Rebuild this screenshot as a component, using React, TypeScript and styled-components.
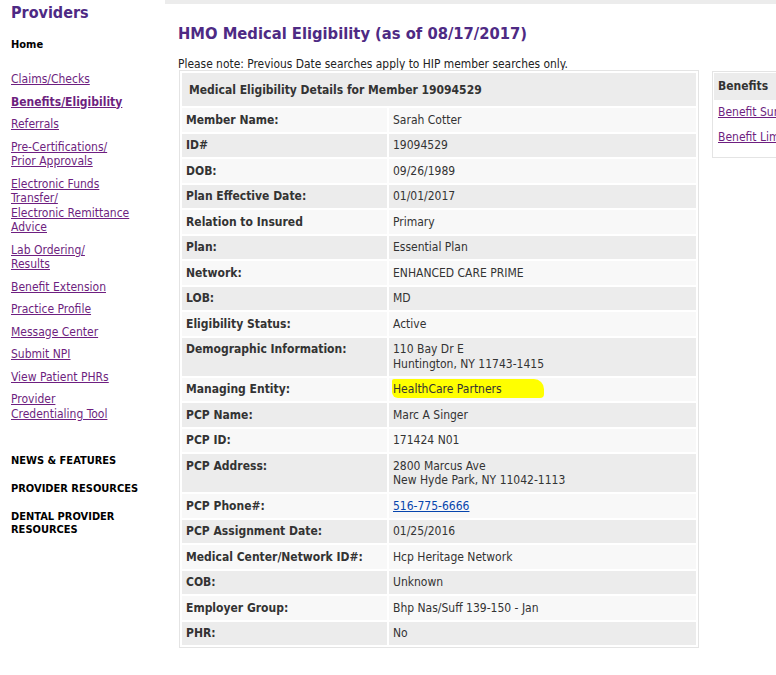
import React from "react";
import styled, { createGlobalStyle } from "styled-components";

const FONT = `"DejaVu Sans Condensed", Tahoma, "Liberation Sans", sans-serif`;

const Global = createGlobalStyle`
  html, body { margin: 0; padding: 0; background: #fff; }
  body { font-family: ${FONT}; font-size: 12px; color: #333; }
`;

const Page = styled.div`
  display: flex;
  align-items: flex-start;
  width: 776px;
  min-height: 675px;
  overflow: hidden;
`;

const Sidebar = styled.nav`
  flex: 0 0 165px;
  box-sizing: border-box;
  padding: 4px 0 0 11px;
`;

const Brand = styled.div`
  font-size: 16px;
  font-weight: bold;
  color: #4e2a84;
  line-height: 18px;
`;

const HomeLabel = styled.div`
  margin-top: 16px;
  font-size: 11px;
  font-weight: bold;
  color: #000;
  line-height: 14px;
`;

const NavList = styled.ul`
  list-style: none;
  margin: 20px 0 0;
  padding: 0;
  display: flex;
  flex-direction: column;
  gap: 8px;
`;

const NavLink = styled.a<{ $active?: boolean }>`
  display: block;
  font-size: 12px;
  line-height: 14.5px;
  color: #6e1f80;
  text-decoration: underline;
  font-weight: ${(p) => (p.$active ? "bold" : "normal")};
  cursor: pointer;
`;

const SectionList = styled.div`
  margin-top: 33px;
  display: flex;
  flex-direction: column;
  gap: 15px;
`;

const SectionHeading = styled.div`
  font-size: 11px;
  font-weight: bold;
  color: #000;
  line-height: 13px;
`;

const Main = styled.main`
  flex: 1;
  border-top: 4px solid #ececec;
  padding: 0 0 0 13px;
  min-width: 0;
`;

const Title = styled.h1`
  margin: 18px 0 0;
  font-size: 16.4px;
  font-weight: bold;
  color: #4e2a84;
  line-height: 24px;
`;

const Note = styled.p`
  margin: 11px 0 0;
  font-size: 11.9px;
  line-height: 15px;
  color: #222;
`;

const ContentRow = styled.div`
  display: flex;
  align-items: flex-start;
  gap: 13px;
`;

const DetailsTable = styled.table`
  margin: -2px 0 0 1px;
  width: 520px;
  flex: 0 0 520px;
  border: 1px solid #e4e4e4;
  border-spacing: 2px;
  box-sizing: border-box;
`;

const HeadCell = styled.th`
  background: #ececec;
  text-align: left;
  font-weight: bold;
  font-size: 12px;
  color: #333;
  height: 33px;
  padding: 0 7px;
`;

const Row = styled.tr<{ $alt: boolean }>`
  background: ${(p) => (p.$alt ? "#ececec" : "#f8f8f8")};
`;

const LabelCell = styled.td`
  width: 197px;
  padding: 4.5px 4px;
  font-weight: bold;
  line-height: 14.5px;
  vertical-align: top;
  color: #333;
`;

const ValueCell = styled.td`
  padding: 4.5px 4px;
  line-height: 14.5px;
  vertical-align: top;
  color: #333;
`;

const Highlight = styled.span`
  background: #ffff00;
  padding: 3px 42px 2px 1px;
  margin-left: -1px;
  border-radius: 2px 10px 4px 6px;
`;

const PhoneLink = styled.a`
  color: #0645ad;
  text-decoration: underline;
`;

const SidePanel = styled.aside`
  flex: 0 0 90px;
  margin-top: -1px;
  border: 1px solid #e4e4e4;
  padding: 1px 0 12px 1px;
`;

const SideHead = styled.div`
  background: #ececec;
  font-weight: bold;
  height: 27px;
  line-height: 27px;
  padding-left: 4px;
  color: #333;
  white-space: nowrap;
`;

const SideLinks = styled.div`
  display: flex;
  flex-direction: column;
  gap: 10px;
  padding: 5px 0 0 4px;
`;

const SideLink = styled.a`
  color: #6e1f80;
  text-decoration: underline;
  white-space: nowrap;
  line-height: 15px;
`;

type Item = { label: string; value: React.ReactNode };

const rows: Item[] = [
  { label: "Member Name:", value: "Sarah Cotter" },
  { label: "ID#", value: "19094529" },
  { label: "DOB:", value: "09/26/1989" },
  { label: "Plan Effective Date:", value: "01/01/2017" },
  { label: "Relation to Insured", value: "Primary" },
  { label: "Plan:", value: "Essential Plan" },
  { label: "Network:", value: "ENHANCED CARE PRIME" },
  { label: "LOB:", value: "MD" },
  { label: "Eligibility Status:", value: "Active" },
  {
    label: "Demographic Information:",
    value: (
      <>
        110 Bay Dr E
        <br />
        Huntington, NY 11743-1415
      </>
    ),
  },
  { label: "Managing Entity:", value: <Highlight>HealthCare Partners</Highlight> },
  { label: "PCP Name:", value: "Marc A Singer" },
  { label: "PCP ID:", value: "171424 N01" },
  {
    label: "PCP Address:",
    value: (
      <>
        2800 Marcus Ave
        <br />
        New Hyde Park, NY 11042-1113
      </>
    ),
  },
  { label: "PCP Phone#:", value: <PhoneLink>516-775-6666</PhoneLink> },
  { label: "PCP Assignment Date:", value: "01/25/2016" },
  { label: "Medical Center/Network ID#:", value: "Hcp Heritage Network" },
  { label: "COB:", value: "Unknown" },
  { label: "Employer Group:", value: "Bhp Nas/Suff 139-150 - Jan" },
  { label: "PHR:", value: "No" },
];

const navItems: { lines: string[]; active?: boolean }[] = [
  { lines: ["Claims/Checks"] },
  { lines: ["Benefits/Eligibility"], active: true },
  { lines: ["Referrals"] },
  { lines: ["Pre-Certifications/", "Prior Approvals"] },
  { lines: ["Electronic Funds", "Transfer/", "Electronic Remittance", "Advice"] },
  { lines: ["Lab Ordering/", "Results"] },
  { lines: ["Benefit Extension"] },
  { lines: ["Practice Profile"] },
  { lines: ["Message Center"] },
  { lines: ["Submit NPI"] },
  { lines: ["View Patient PHRs"] },
  { lines: ["Provider", "Credentialing Tool"] },
];

export default function App() {
  return (
    <>
      <Global />
      <Page>
        <Sidebar>
          <Brand>Providers</Brand>
          <HomeLabel>Home</HomeLabel>
          <NavList>
            {navItems.map((n, i) => (
              <li key={i}>
                <NavLink $active={n.active}>
                  {n.lines.map((l, j) => (
                    <React.Fragment key={j}>
                      {j > 0 && <br />}
                      {l}
                    </React.Fragment>
                  ))}
                </NavLink>
              </li>
            ))}
          </NavList>
          <SectionList>
            <SectionHeading>NEWS &amp; FEATURES</SectionHeading>
            <SectionHeading>PROVIDER RESOURCES</SectionHeading>
            <SectionHeading>
              DENTAL PROVIDER
              <br />
              RESOURCES
            </SectionHeading>
          </SectionList>
        </Sidebar>
        <Main>
          <Title>HMO Medical Eligibility (as of 08/17/2017)</Title>
          <Note>Please note: Previous Date searches apply to HIP member searches only.</Note>
          <ContentRow>
            <DetailsTable>
              <thead>
                <tr>
                  <HeadCell colSpan={2}>Medical Eligibility Details for Member 19094529</HeadCell>
                </tr>
              </thead>
              <tbody>
                {rows.map((r, i) => (
                  <Row key={r.label} $alt={i % 2 === 1}>
                    <LabelCell>{r.label}</LabelCell>
                    <ValueCell>{r.value}</ValueCell>
                  </Row>
                ))}
              </tbody>
            </DetailsTable>
            <SidePanel>
              <SideHead>Benefits</SideHead>
              <SideLinks>
                <SideLink>Benefit Summary</SideLink>
                <SideLink>Benefit Limits</SideLink>
              </SideLinks>
            </SidePanel>
          </ContentRow>
        </Main>
      </Page>
    </>
  );
}
